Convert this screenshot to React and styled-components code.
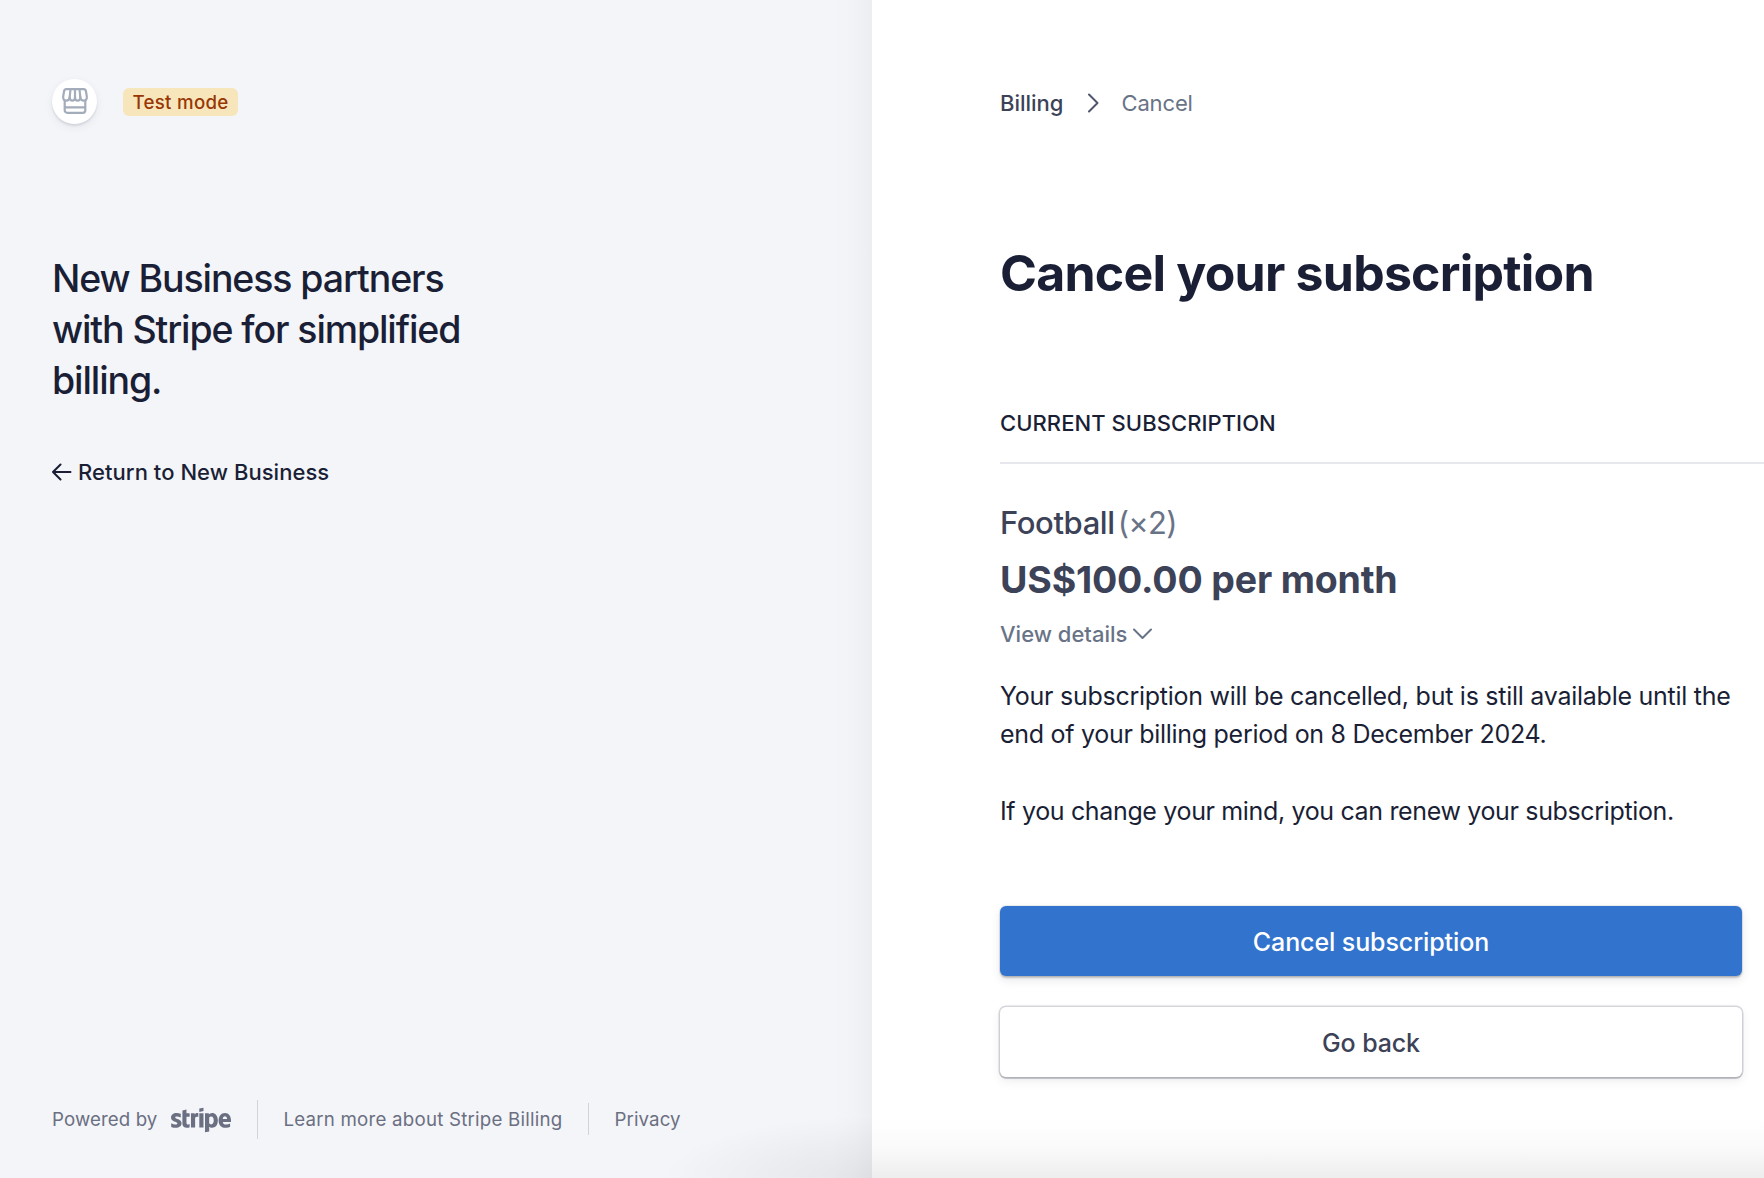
import React from "react";
import styled, { createGlobalStyle } from "styled-components";
import { FaStripe } from "react-icons/fa";

const Global = createGlobalStyle`
  *, *::before, *::after { box-sizing: border-box; }
  body { margin: 0; background: #fff; overflow: hidden; font-family: Inter, "Liberation Sans", sans-serif; }
`;

const Page = styled.div`
  display: flex;
  width: 1764px;
  height: 1178px;
  overflow: hidden;
  background: linear-gradient(to bottom, rgba(0,0,0,0) 1118px, rgba(0,0,0,0.02) 1148px, rgba(0,0,0,0.07) 1178px), #fff;
`;

const Side = styled.aside`
  display: flex;
  flex-direction: column;
  width: 872px;
  flex: none;
  padding: 79px 52px 38px;
  background:
    radial-gradient(ellipse 210px 62px at 100% 100%, rgba(0,0,0,0.065), rgba(0,0,0,0.035) 50%, rgba(0,0,0,0)),
    linear-gradient(to left, rgba(40,40,60,0.035), rgba(40,40,60,0.012) 18px, rgba(0,0,0,0) 40px),
    #f4f5f9;
`;

const Brand = styled.div`
  display: flex;
  align-items: center;
  gap: 26px;
  height: 45px;
`;

const Avatar = styled.div`
  display: grid;
  place-items: center;
  width: 45px;
  height: 45px;
  padding-bottom: 2px;
  border-radius: 50%;
  background: #fff;
  box-shadow: 0 2px 2px rgba(60,66,87,0.12), 0 3px 8px rgba(60,66,87,0.08);
`;

const Badge = styled.span`
  display: flex;
  align-items: center;
  justify-content: center;
  width: 115px;
  height: 28px;
  padding-top: 2px;
  border-radius: 6px;
  background: #f7e6bb;
  color: #983705;
  font-size: 18.7px;
  font-weight: 500;
  letter-spacing: 0.3px;
`;

const Text = styled.span`
  display: block;
  white-space: nowrap;
  font-size: ${(p) => p.$size}px;
  line-height: ${(p) => p.$line}px;
  font-weight: ${(p) => p.$weight || 400};
  letter-spacing: ${(p) => p.$track || 0}px;
  color: ${(p) => p.$color || "#1a1f36"};
`;

const Headline = styled.h2`
  margin: 129px 0 0;
  font-weight: 500;
`;

const Return = styled.a`
  display: flex;
  align-items: center;
  gap: 6px;
  margin-top: 51px;
`;

const Footer = styled.footer`
  display: flex;
  align-items: center;
  height: 42px;
  margin-top: auto;
`;

const FooterText = styled(Text).attrs({ $size: 18.7, $line: 26, $color: "#6b6f82" })`
  padding-top: 2px;
`;

const Logo = styled(FaStripe)`
  width: 60px;
  height: 48px;
  margin: 1px 0 0 14px;
  color: #6b6f82;
`;

const Rule = styled.i`
  width: 1px;
  height: ${(p) => p.$h}px;
  margin: 0 25px 0 26px;
  background: #d2d4da;
`;

const Main = styled.main`
  display: flex;
  flex-direction: column;
  flex: 1;
  min-width: 0;
  padding: 88px 0 0 128px;
`;

const Crumbs = styled.nav`
  display: flex;
  align-items: center;
  height: 30px;
`;

const CrumbChevron = styled.svg`
  margin: 0 22px 0 23px;
`;

const Title = styled.h1`
  margin: 125px 0 0;
`;

const Section = styled.h3`
  margin: 105px 0 0;
  padding-bottom: 24px;
  border-bottom: 2px solid #e6e8ee;
`;

const Product = styled.div`
  display: flex;
  gap: 3px;
  margin-top: 39px;
`;

const Details = styled.div`
  display: flex;
  align-items: center;
  gap: 6px;
  margin-top: 14px;
`;

const Copy = styled.div`
  margin-top: ${(p) => p.$top}px;
`;

const Button = styled.button`
  display: flex;
  align-items: center;
  justify-content: center;
  width: 742px;
  height: 70px;
  flex: none;
  margin-top: ${(p) => p.$top}px;
  padding: 2px 0 0;
  border: 0;
  border-radius: 6px;
  font-family: inherit;
  background: ${(p) => (p.$primary ? "#3273ce" : "#fff")};
  box-shadow: ${(p) =>
    p.$primary
      ? "0 0 0 1px rgba(50,60,90,0.08), 0 2px 2px rgba(0,0,0,0.2), 0 4px 10px rgba(60,66,87,0.12)"
      : "0 0 0 1.5px rgba(60,66,87,0.2), 0 2px 1px rgba(0,0,0,0.14), 0 4px 10px rgba(60,66,87,0.1)"};
`;

const ShopIcon = () => (
  <svg width="26" height="26" viewBox="0 0 26 26" fill="none" stroke="#a3acba" strokeWidth="2.2" strokeLinejoin="round" strokeLinecap="round">
    <path d="M4.500 1.200H21.500Q23.600 1.200 24 3.500L24.800 8.500Q25 12.700 21.800 12.700Q18.700 12.700 18.300 9Q18.300 12.700 15.700 12.700Q13 12.700 13 9Q13 12.700 10.300 12.700Q7.700 12.700 7.700 9Q7.300 12.700 4.200 12.700Q1 12.700 1.200 8.500L2 3.500Q2.400 1.200 4.500 1.200Z" />
    <path d="M8.500 1.500L7.700 9M13 1.500V9M17.500 1.500L18.300 9" />
    <path d="M2.700 12.700V22.300A2.500 2.500 0 0 0 5.200 24.800H20.800A2.500 2.500 0 0 0 23.300 22.300V12.700M2.700 19.300H23.300" />
  </svg>
);

const headline = ["New Business partners", "with Stripe for simplified", "billing."];

export default function App() {
  return (
    <>
      <Global />
      <Page>
        <Side>
          <Brand>
            <Avatar><ShopIcon /></Avatar>
            <Badge>Test mode</Badge>
          </Brand>
          <Headline>
            {headline.map((t) => (
              <Text key={t} $size={37.5} $line={51} $weight={500} $track={-1.1}>{t}</Text>
            ))}
          </Headline>
          <Return>
            <svg width="20" height="18" viewBox="0 0 20 18" fill="none" stroke="#1a1f36" strokeWidth="2" strokeLinecap="round" strokeLinejoin="round">
              <path d="M1 9H18.500M8.500 1.500L1 9L8.500 16.500" />
            </svg>
            <Text $size={22} $line={30} $weight={500} $track={0.05}>Return to New Business</Text>
          </Return>
          <Footer>
            <FooterText $track={0.1}>Powered by</FooterText>
            <Logo />
            <Rule $h={39} />
            <FooterText $track={0.22}>Learn more about Stripe Billing</FooterText>
            <Rule $h={32} />
            <FooterText $track={0.1}>Privacy</FooterText>
          </Footer>
        </Side>
        <Main>
          <Crumbs>
            <Text $size={22} $line={30} $weight={500} $color="#3c4257">Billing</Text>
            <CrumbChevron width="13" height="20" viewBox="0 0 13 20" fill="none" stroke="#4f566b" strokeWidth="2" strokeLinecap="round" strokeLinejoin="round">
              <path d="M2 1.500L10.500 10L2 18.500" />
            </CrumbChevron>
            <Text $size={22} $line={30} $track={-0.15} $color="#697386">Cancel</Text>
          </Crumbs>
          <Title><Text $size={50} $line={60} $weight={700} $track={-0.78}>Cancel your subscription</Text></Title>
          <Section><Text $size={22} $line={30} $weight={500} $track={0.06}>CURRENT SUBSCRIPTION</Text></Section>
          <Product>
            <Text $size={31} $line={40} $weight={500} $track={-0.4} $color="#3c4257">Football</Text>
            <Text $size={31} $line={40} $track={-0.7} $color="#697386">(×2)</Text>
          </Product>
          <Copy $top={12}><Text $size={37.5} $line={50} $weight={700} $track={-0.18} $color="#3c4257">US$100.00 per month</Text></Copy>
          <Details>
            <Text $size={22} $line={30} $weight={500} $color="#697386">View details</Text>
            <svg width="19" height="12" viewBox="0 0 19 12" fill="none" stroke="#697386" strokeWidth="2" strokeLinecap="round" strokeLinejoin="round">
              <path d="M1 1.500L9.500 10L18 1.500" />
            </svg>
          </Details>
          <Copy $top={28}>
            <Text $size={25} $line={38} $track={-0.26}>Your subscription will be cancelled, but is still available until the</Text>
            <Text $size={25} $line={38} $track={-0.29}>end of your billing period on 8 December 2024.</Text>
          </Copy>
          <Copy $top={39}><Text $size={25} $line={38} $track={-0.35}>If you change your mind, you can renew your subscription.</Text></Copy>
          <Button $primary $top={76}><Text $size={25} $line={34} $weight={500} $track={-0.1} $color="#fff">Cancel subscription</Text></Button>
          <Button $top={31}><Text $size={25} $line={34} $weight={500} $track={-0.12} $color="#3c4257">Go back</Text></Button>
        </Main>
      </Page>
    </>
  );
}
